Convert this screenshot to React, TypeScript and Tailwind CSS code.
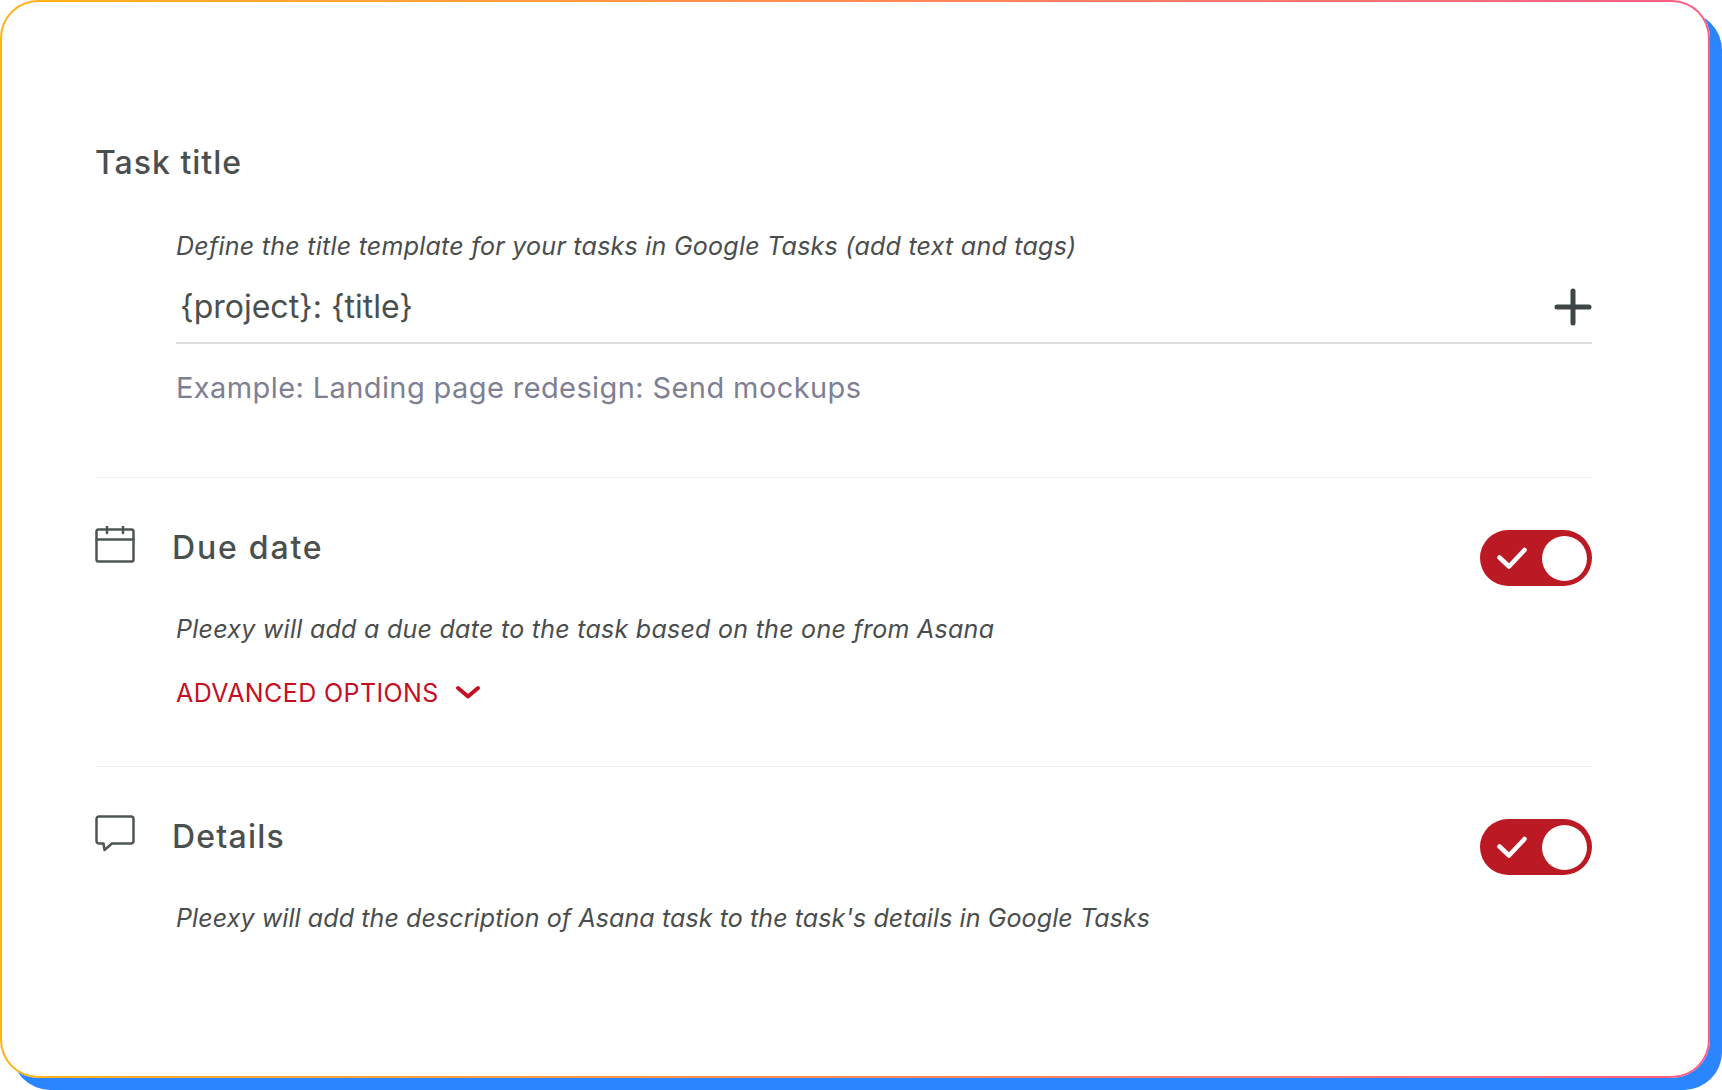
function Toggle() {
  return (
    <div className="flex h-[56px] w-[112px] shrink-0 items-center justify-between rounded-full bg-[#bb1a24] pl-[17px] pr-[5px]">
      <svg width="30" height="23" viewBox="0 0 30 23" fill="none" stroke="#fff" strokeWidth="4.5" strokeLinecap="round" strokeLinejoin="round">
        <path d="M2.500 10.500L12 19.500 27.500 3" />
      </svg>
      <div className="h-[45px] w-[45px] rounded-full bg-white" />
    </div>
  );
}

const desc = "text-[25px] leading-[32px] italic text-[#4a4d4d]";
const title = "text-[32px] leading-[40px] font-medium text-[#4a4f4f]";

export default function App() {
  return (
    <div className="h-[1090px] w-[1722px] overflow-hidden bg-white font-['Inter','Liberation_Sans',sans-serif]">
      <div className="h-[1078px] w-[1710px] rounded-[38px] bg-gradient-to-r from-[#ffb30f] via-[#ff8a50] to-[#fd5b85] p-[2px] shadow-[12px_12px_0_#2a85ff]">
        <div className="h-full w-full rounded-[36px] bg-white pl-[93px] pr-[116px] pt-[141px]">
          <div className={`h-[40px] tracking-[1px] ${title}`}>Task title</div>
          <div className="pl-[81px]">
            <div className={`mt-[47px] tracking-[0.25px] ${desc}`}>Define the title template for your tasks in Google Tasks (add text and tags)</div>
            <div className="mt-[9px] flex h-[73px] items-center justify-between border-b-2 border-[#dcdcdc] pl-[4px]">
              <span className="text-[32px] leading-[40px] text-[#4a4f4f]">{"{project}: {title}"}</span>
              <svg width="38" height="38" viewBox="0 0 38 38" fill="none" stroke="#3f4646" strokeWidth="5" strokeLinecap="round">
                <path d="M19 3v32M3 19h32" />
              </svg>
            </div>
            <div className="mt-[26px] text-[29px] leading-[36px] tracking-[0.4px] text-[#7f7f93]">Example: Landing page redesign: Send mockups</div>
          </div>
          <div className="ml-[1px] mt-[71px] h-[1px] bg-[#f0f0f0]" />

          <div className="mt-[48px] flex items-start justify-between">
            <div className="flex items-start">
              <svg width="40" height="38" viewBox="0 0 40 38" fill="none" stroke="#4f5555" strokeWidth="2.500" strokeLinecap="round" strokeLinejoin="round">
                <rect x="1.500" y="3.500" width="37" height="32" rx="2" />
                <path d="M1.500 13.500h37M12 0v7M28 0v7" />
              </svg>
              <div className={`ml-[37px] mt-[2px] tracking-[1.8px] ${title}`}>Due date</div>
            </div>
            <div className="mt-[4px]"><Toggle /></div>
          </div>
          <div className={`mt-[27px] pl-[81px] tracking-[0.27px] ${desc}`}>Pleexy will add a due date to the task based on the one from Asana</div>
          <div className="mt-[32px] flex items-center pl-[81px] text-[25px] leading-[32px] tracking-[0.4px] text-[#c50f23]">
            ADVANCED OPTIONS
            <svg width="26" height="16" viewBox="0 0 26 16" fill="none" stroke="#c50f23" strokeWidth="4" strokeLinecap="round" strokeLinejoin="round" className="ml-[16px]">
              <path d="M3 3l10 8.500L23 3" />
            </svg>
          </div>
          <div className="ml-[1px] mt-[57px] h-[1px] bg-[#f0f0f0]" />

          <div className="mt-[48px] flex items-start justify-between">
            <div className="flex items-start">
              <svg width="40" height="38" viewBox="0 0 40 38" fill="none" stroke="#4f5555" strokeWidth="2.500" strokeLinecap="round" strokeLinejoin="round">
                <path d="M4 1.500h32a2.500 2.500 0 0 1 2.500 2.500v22a2.500 2.500 0 0 1-2.500 2.500H17l-7.500 6.500-1-6.500H4A2.500 2.500 0 0 1 1.500 26V4A2.500 2.500 0 0 1 4 1.500z" />
              </svg>
              <div className={`ml-[37px] mt-[2px] tracking-[1.2px] ${title}`}>Details</div>
            </div>
            <div className="mt-[4px]"><Toggle /></div>
          </div>
          <div className={`mt-[27px] pl-[81px] tracking-[0.1px] ${desc}`}>Pleexy will add the description of Asana task to the task's details in Google Tasks</div>
        </div>
      </div>
    </div>
  );
}
